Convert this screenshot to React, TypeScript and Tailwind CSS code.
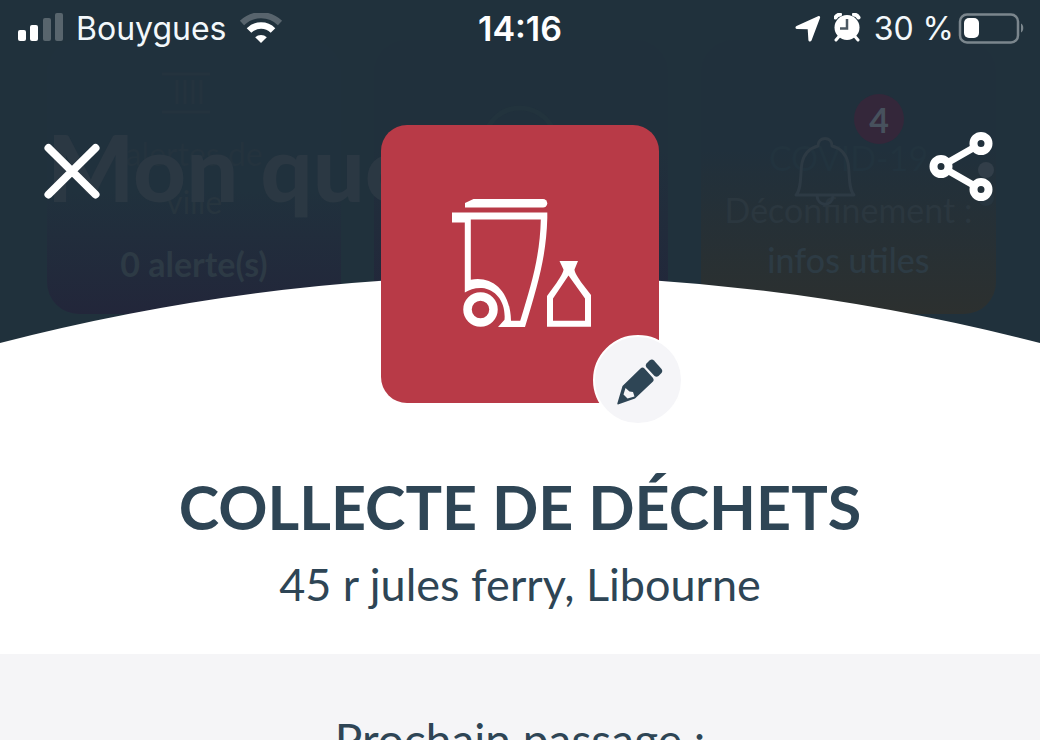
function SignalIcon() {
  return (
    <svg className="h-8 w-12" viewBox="0 0 48 32" fill="#fff" aria-hidden="true">
      <rect x="2" y="17" width="8" height="11" rx="2" />
      <rect x="14" y="12" width="8" height="16" rx="2" />
      <g opacity=".25">
        <rect x="27" y="5" width="8" height="23" rx="2" />
        <rect x="39" y="0" width="8" height="28" rx="2" />
      </g>
    </svg>
  );
}

function WifiIcon() {
  return (
    <svg className="h-8 w-11" viewBox="0 0 44 32" fill="none" aria-hidden="true">
      <path d="M3 10A27 27 0 0 1 41 10" stroke="#fff" strokeWidth="6" opacity=".25" />
      <path d="M10 17.500A17 17 0 0 1 34 17.500" stroke="#fff" strokeWidth="6.500" />
      <path d="M22 30l-5.800-5.700a8.500 8.500 0 0 1 11.600 0z" fill="#fff" />
    </svg>
  );
}

function LocationIcon() {
  return (
    <svg className="h-7 w-7" viewBox="0 0 28 28" fill="#fff" aria-hidden="true">
      <path d="M24 1.200c1.500-.6 2.600.4 2 1.900L17.500 25.500c-.6 1.500-2.900 1.400-3.100-.5l-.7-10.700-10.600-.2c-1.900-.1-2.200-2.500-.6-3.200z" />
    </svg>
  );
}

function AlarmIcon() {
  return (
    <svg className="h-8 w-7" viewBox="0 0 28 32" fill="none" aria-hidden="true">
      <circle cx="13" cy="14.500" r="12.500" fill="#fff" />
      <path d="M1.500 4.500A6 6 0 0 1 6 1.500M24.500 4.500A6 6 0 0 0 20 1.500" stroke="#fff" strokeWidth="4" strokeLinecap="round" />
      <path d="M5 23.500l-3 3.500M21 23.500l3 3.500" stroke="#fff" strokeWidth="3" strokeLinecap="round" />
      <path d="M13 6v9.500H6" stroke="#4c5963" strokeWidth="2.500" />
    </svg>
  );
}

function BatteryIcon() {
  return (
    <svg className="h-8 w-[66px]" viewBox="0 0 66 32" fill="none" aria-hidden="true">
      <rect x="2" y="1.500" width="58" height="28" rx="7" stroke="#7b868d" strokeWidth="2.500" />
      <rect x="6" y="5" width="15" height="20" rx="5" fill="#fff" />
      <path d="M63 10.500c3 1.500 3 7.500 0 9z" fill="#7b868d" />
    </svg>
  );
}

function StatusBar() {
  return (
    <div className="relative grid grid-cols-[1fr_auto_1fr] items-center px-4 pt-[13px] pb-[7px] font-['Inter',sans-serif] text-[32px] leading-8 text-[#f3f8fb]">
      <div className="flex items-center gap-3">
        <SignalIcon />
        <span>Bouygues</span>
        <WifiIcon />
      </div>
      <span className="text-[34px] font-semibold text-white">14:16</span>
      <div className="flex items-center justify-end gap-3">
        <LocationIcon />
        <AlarmIcon />
        <div className="flex items-center gap-1">
          <span>30 %</span>
          <BatteryIcon />
        </div>
      </div>
    </div>
  );
}

/* Home screen that shows faintly through the dark overlay */
function DimmedHome() {
  return (
    <div className="absolute inset-0 overflow-hidden text-center text-[#2d3a45]" aria-hidden="true">
      <div className="absolute top-10 left-[47px] h-[274px] w-[294px] rounded-[32px] bg-linear-to-b from-[#20313d] from-55% to-[#22263a]" />
      <div className="absolute top-10 left-[374px] h-[274px] w-[294px] rounded-[32px] bg-linear-to-b from-[#20303c] from-40% to-[#22263a]" />
      <div className="absolute top-10 right-[44px] h-[274px] w-[295px] rounded-[32px] bg-linear-to-b from-[#20303c] from-40% to-[#2c302f]" />
      <svg className="absolute top-[72px] left-[160px]" width="54" height="42" viewBox="0 0 54 42" fill="none" stroke="#24333e" strokeWidth="3">
        <path d="M2 2h48M17 8v24M25 8v24M33 8v24M41 8v24M2 40h48" />
      </svg>
      <svg className="absolute top-[104px] left-[480px]" width="80" height="80" viewBox="0 0 80 80" fill="none" stroke="#22333d" strokeWidth="5">
        <circle cx="40" cy="40" r="36" />
      </svg>
      <p className="absolute top-[134px] left-[47px] w-[294px] text-[32px] leading-10 text-[#24333e]">alertes de</p>
      <p className="absolute top-[182px] left-[47px] w-[294px] text-[32px] leading-10 text-[#27353f]">ville</p>
      <p className="absolute top-[244px] left-[47px] w-[294px] text-[34px] leading-10 font-bold">0 alerte(s)</p>
      <p className="absolute top-[117px] left-[47px] text-[92px] leading-[100px] font-black whitespace-nowrap text-[#2b3843]">Mon quotidien</p>
      <p className="absolute top-[138px] right-[44px] w-[295px] text-[34px] leading-10 text-[#22333e]">COVID-19</p>
      <p className="absolute top-[190px] right-[44px] w-[295px] text-[34px] leading-10 text-[#2b373f]">Déconfinement :</p>
      <p className="absolute top-[240px] right-[44px] w-[295px] text-[34px] leading-10 font-medium text-[#2d3b44]">infos utiles</p>
      <svg className="absolute top-[136px] right-[183px]" width="64" height="72" viewBox="0 0 64 72" fill="none" stroke="#2d3a44" strokeWidth="3" strokeLinejoin="round">
        <path d="M3 59c6-6 4-22 6-32 2-9 8-15 16-17 0-10 14-10 14 0 8 2 14 8 16 17 2 10 0 26 6 32zM24 60c1 11 15 11 16 0" />
      </svg>
      <div className="absolute top-[94px] right-[136px] size-[50px] rounded-full bg-[#34273a] text-[34px] leading-[52px] font-bold text-[#47515d]">4</div>
      <div className="absolute top-[162px] right-[46px] size-4 rounded-full bg-[#323e49]" />
      <div className="absolute top-[190px] right-[46px] size-4 rounded-full bg-[#27353f]" />
    </div>
  );
}

function BinIcon() {
  return (
    <svg className="h-[130px] w-[140px]" viewBox="0 0 140 130" fill="#fff" fillRule="evenodd" aria-hidden="true">
      <path d="M13 4L21.500 0H91a4 4 0 0 1 0 8.500H13z" />
      <path d="M0 13.500h95.300v5.500c-1 38-9 65-22.300 109H46l6.500-7.300C54 103 44 90.500 30 89c-7-.3-12.500 1.500-17.200 4.500V23.500H0zM18.800 20.500v60.300C40 76.500 58.500 92 59 121.800h9.200C80 84 88 56 88.800 20.500z" />
      <circle cx="28.500" cy="110.500" r="13" fill="none" stroke="#fff" strokeWidth="8.500" />
      <path d="M107.500 62H126l-3.500 8.500c0 3 4 9 8 14.500l8.500 11v31.700H95V97l9.500-13c4-6 7-11 7-13.500zM116.500 76.500L101 99.500v22.200h32V99.500z" />
    </svg>
  );
}

function PencilIcon() {
  return (
    <svg className="size-[46px]" viewBox="0 0 46 46" fill="#2e4555" aria-hidden="true">
      <path d="M23.500 9.500Q25.500 7.500 27.500 9.500l8.500 9.500q1.500 2 0 3.500L18 39.500 1 45.500q-.8 0-.7-1L5.500 27zM8.500 29L6.500 35.500 10.500 39.500 17.500 37.500 16 33 12.500 32.500z" fillRule="evenodd" />
      <path d="M29.500 4.500L32.500 1.500q2.500-1.800 4.500 0l7.500 8.500q1.500 2 0 4L41.500 17q-2 1.500-4 0L29.500 8.500q-1.500-2 0-4z" />
    </svg>
  );
}

function Header() {
  return (
    <header className="relative bg-[#20313c]">
      <DimmedHome />
      <svg className="absolute bottom-0 left-0 h-[67px] w-full" viewBox="0 0 1040 67" preserveAspectRatio="none" aria-hidden="true">
        <path d="M0 67Q520-67 1040 67Z" fill="#fff" />
      </svg>
      <StatusBar />
      <div className="relative -mb-[60px] grid grid-cols-[1fr_auto_1fr] items-start px-10 pt-[73px]">
        <button type="button" aria-label="Fermer" className="mt-[14px] w-16 justify-self-start">
          <svg className="size-16" viewBox="0 0 64 64" fill="none" stroke="#fff" strokeWidth="8" strokeLinecap="round" aria-hidden="true">
            <path d="M8.500 9l47 46.500M55.500 9L8.500 55.500" />
          </svg>
        </button>
        <div className="relative flex size-[278px] items-center justify-center rounded-[26px] bg-[#b83a47] pl-1">
          <BinIcon />
          <button
            type="button"
            aria-label="Modifier"
            className="absolute -right-6 -bottom-[22px] flex size-[90px] items-center justify-center rounded-full border-2 border-white bg-[#f5f5f8] pt-1 pl-1"
          >
            <PencilIcon />
          </button>
        </div>
        <button type="button" aria-label="Partager" className="mt-[6px] w-[72px] justify-self-end">
          <svg className="h-[72px] w-[72px]" viewBox="0 0 72 72" fill="none" stroke="#fff" strokeWidth="8" aria-hidden="true">
            <path d="M19 32l28-16M19 39l28 16" strokeWidth="7" />
            <circle cx="13" cy="35.500" r="7.500" />
            <circle cx="53" cy="12.500" r="7.500" />
            <circle cx="53" cy="58.500" r="7.500" />
          </svg>
        </button>
      </div>
    </header>
  );
}

export default function App() {
  return (
    <div className="flex h-screen flex-col overflow-hidden bg-white font-['Lato',sans-serif] text-[#2e4555]">
      <Header />
      <main className="flex flex-1 flex-col text-center">
        <div className="px-6 pt-32 pb-11">
          <h1 className="text-[61px] leading-[72px] font-bold">COLLECTE DE DÉCHETS</h1>
          <p className="mt-[15px] text-[45px] leading-[52px]">45 r jules ferry, Libourne</p>
        </div>
        <section className="flex-1 bg-[#f5f5f7] px-6 pt-[60px]">
          <p className="text-[46px] leading-[52px]">Prochain passage :</p>
        </section>
      </main>
    </div>
  );
}
